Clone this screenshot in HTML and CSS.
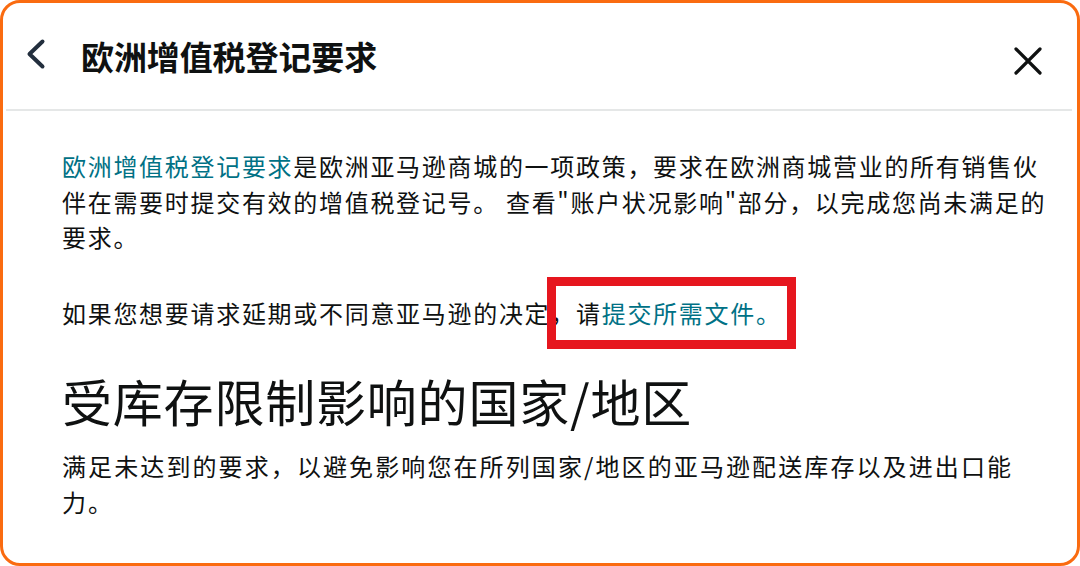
FILE: index.html
```html
<!DOCTYPE html>
<html lang="zh-CN">
<head>
<meta charset="utf-8">
<title>欧洲增值税登记要求</title>
<link rel="stylesheet" href="styles.css">
</head>
<body>
<div class="frame">
  <header class="header">
    <svg class="back" width="20" height="32" viewBox="0 0 20 32" aria-hidden="true">
      <path d="M16.5 3.5 L3.5 16 L16.5 28.5" fill="none" stroke="#232f3e" stroke-width="4" stroke-linecap="round" stroke-linejoin="round"/>
    </svg>
    <h1 class="title">欧洲增值税登记要求</h1>
    <svg class="close" width="30" height="30" viewBox="0 0 30 30" aria-hidden="true">
      <path d="M3 3 L27 27 M27 3 L3 27" fill="none" stroke="#0f1111" stroke-width="3.2" stroke-linecap="round"/>
    </svg>
  </header>
  <main class="body">
    <p class="para para-first"><a class="link" href="#">欧洲增值税登记要求</a>是欧洲亚马逊商城的一项政策，要求在欧洲商城营业的所有销售伙伴在需要时提交有效的增值税登记号。 查看"账户状况影响"部分，以完成您尚未满足的要求。</p>
    <p class="para para-second">如果您想要请求延期或不同意亚马逊的决定，请<a class="link" href="#">提交所需文件。</a><span class="mark"></span></p>
    <h2 class="heading">受库存限制影响的国家/地区</h2>
    <p class="para para-last">满足未达到的要求，以避免影响您在所列国家/地区的亚马逊配送库存以及进出口能力。</p>
  </main>
</div>
</body>
</html>
```

FILE: styles.css
```css
html, body {
  margin: 0;
  padding: 0;
  background: #ffffff;
}

body {
  font-family: "Noto Sans CJK SC", "Noto Sans", sans-serif;
  color: #0f1111;
}

.frame {
  width: 1080px;
  height: 566px;
  box-sizing: border-box;
  border: 3px solid #fa6b10;
  border-radius: 20px;
  overflow: hidden;
  background: #ffffff;
}

.header {
  display: flex;
  align-items: center;
  height: 106px;
  margin: 0 5px 0 3px;
  padding: 0 29px 0 20px;
  border-bottom: 2px solid #e5e7e7;
}

.back {
  flex: none;
  margin-top: -4px;
}

.title {
  margin: 0 0 0 35px;
  font-size: 33px;
  font-weight: 700;
  line-height: 40px;
  color: #0f1111;
  letter-spacing: -0.1px;
  flex: 1;
}

.close {
  flex: none;
  margin-top: 10px;
}

.body {
  padding: 37px 0 0 59px;
  width: 985px;
}

.para {
  margin: 0;
  font-size: 24px;
  line-height: 35.5px;
  letter-spacing: 1.7px;
  color: #0f1111;
}

.link {
  color: #007185;
  text-decoration: none;
}

.para-second {
  position: relative;
  margin-top: 40px;
}

.mark {
  position: absolute;
  left: 485px;
  top: -18px;
  width: 249px;
  height: 72px;
  box-sizing: border-box;
  border: 9px solid #e6161e;
  pointer-events: none;
}

.heading {
  margin: 40px 0 0 0;
  font-size: 50px;
  font-weight: 400;
  line-height: 60px;
  letter-spacing: 0.8px;
  color: #0f1111;
}

.para-last {
  margin-top: 18px;
  line-height: 36px;
  letter-spacing: 2.1px;
  max-width: 962px;
}
```
